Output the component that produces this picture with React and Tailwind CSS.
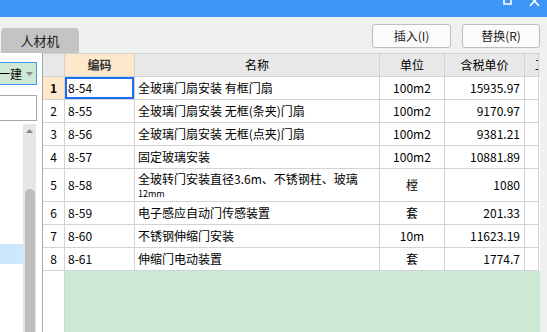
import React from 'react';

const rows = [
  { n: '1', code: '8-54', name: '全玻璃门扇安装 有框门扇', unit: '100m2', price: '15935.97' },
  { n: '2', code: '8-55', name: '全玻璃门扇安装 无框(条夹)门扇', unit: '100m2', price: '9170.97' },
  { n: '3', code: '8-56', name: '全玻璃门扇安装 无框(点夹)门扇', unit: '100m2', price: '9381.21' },
  { n: '4', code: '8-57', name: '固定玻璃安装', unit: '100m2', price: '10881.89' },
  { n: '5', code: '8-58', name: '全玻转门安装直径3.6m、不锈钢柱、玻璃', sub: '12mm', unit: '樘', price: '1080' },
  { n: '6', code: '8-59', name: '电子感应自动门传感装置', unit: '套', price: '201.33' },
  { n: '7', code: '8-60', name: '不锈钢伸缩门安装', unit: '10m', price: '11623.19' },
  { n: '8', code: '8-61', name: '伸缩门电动装置', unit: '套', price: '1774.7' },
];

const cols = 'grid grid-cols-[22px_70px_245px_65px_80px_14px]';
const cell = 'border-r border-b border-[#d3d3d3] flex items-center overflow-hidden whitespace-nowrap';

function TitleBar() {
  return (
    <div className="h-[17px] bg-[#3d96f5] flex justify-end items-start gap-[17px] pr-[7px]">
      <svg width="9" height="5" viewBox="0 0 9 5">
        <path d="M1 -3 V4 H8 V-3" fill="none" stroke="white" strokeWidth="1.6" />
      </svg>
      <svg width="11" height="6" viewBox="0 0 11 6">
        <path d="M1 -4 L10 6 M10 -4 L1 6" stroke="white" strokeWidth="1.6" />
      </svg>
    </div>
  );
}

function Toolbar() {
  return (
    <div className="h-[36px] flex justify-between">
      <div className="mt-[11px] ml-px w-[78px] h-[25px] rounded-t-[4px] bg-[#c4c4c4] flex items-center justify-center text-[13px] text-[#222]">
        人材机
      </div>
      <div className="flex gap-[11px] pt-[7px] pr-[7px]">
        <button className="w-[79px] h-[24px] rounded-[3px] border border-[#bdbdbd] bg-[#fbfbfb] text-[12px] text-[#222]">
          插入(I)
        </button>
        <button className="w-[78px] h-[24px] rounded-[3px] border border-[#bdbdbd] bg-[#fbfbfb] text-[12px] text-[#222]">
          替换(R)
        </button>
      </div>
    </div>
  );
}

function LeftPanel() {
  return (
    <div className="w-[43px] bg-white flex flex-col border-r border-[#a8a8a8]">
      <div className="mt-[9px] w-[37px] h-[23px] bg-[#cde8d3] border border-l-0 border-[#3d96f5] flex items-center">
        <span className="w-[22px] overflow-hidden whitespace-nowrap text-[12px] flex justify-end">一建</span>
        <svg width="7" height="4" viewBox="0 0 7 4" className="ml-[4px]">
          <path d="M0 0 H7 L3.5 4 Z" fill="#888" />
        </svg>
      </div>
      <div className="mt-[10px] w-[37px] h-[26px] bg-white border border-l-0 border-[#a8a8a8]" />
      <div className="flex flex-1 mt-[3px]">
        <div className="w-[23px] flex flex-col">
          <div className="h-[120px]" />
          <div className="h-[20px] bg-[#cce8ff]" />
        </div>
        <div className="w-[13px] bg-[#e6e6e6] flex flex-col items-center">
          <svg width="7" height="4" viewBox="0 0 7 4" className="mt-[5px]">
            <path d="M0 4 H7 L3.5 0 Z" fill="#888" />
          </svg>
          <div className="mt-[56px] w-[10px] flex-1 bg-[#bdbdbd] rounded-t-full" />
        </div>
      </div>
    </div>
  );
}

function Grid() {
  return (
    <div className="w-[497px] flex flex-col bg-white text-[12px] text-black">
      <div className={`${cols} h-[24px] bg-[#e8e8e8] border-t border-[#d3d3d3]`}>
        <div className={cell} />
        <div className={`${cell} justify-center bg-[#fde8cc] font-bold text-[#333]`}>编码</div>
        <div className={`${cell} justify-center`}>名称</div>
        <div className={`${cell} justify-center`}>单位</div>
        <div className={`${cell} justify-center`}>含税单价</div>
        <div className={`${cell} pl-[10px]`}>工</div>
      </div>
      {rows.map((r, i) => (
        <div key={r.n} className={`${cols} ${r.sub ? 'h-[33px]' : 'h-[23px]'}`}>
          <div className={`${cell} justify-center ${i === 0 ? 'bg-[#fde8cc] font-bold' : ''}`}>{r.n}</div>
          <div className={`${cell} pl-[3px] ${i === 0 ? 'shadow-[inset_0_0_0_2px_#1a6ff0]' : ''}`}>{r.code}</div>
          {r.sub ? (
            <div className="border-r border-b border-[#d3d3d3] overflow-hidden whitespace-nowrap pl-[3px] pt-[2px] flex flex-col">
              <span className="leading-[16px]">{r.name}</span>
              <span className="mt-[1px] text-[9px] leading-[11px]">{r.sub}</span>
            </div>
          ) : (
            <div className={`${cell} pl-[3px]`}>{r.name}</div>
          )}
          <div className={`${cell} justify-center`}>{r.unit}</div>
          <div className={`${cell} justify-end pr-[4px]`}>{r.price}</div>
          <div className={cell} />
        </div>
      ))}
      <div className="flex flex-1">
        <div className="w-[22px] bg-white border-r border-[#d3d3d3]" />
        <div className="flex-1 bg-[#cde8d3]" />
      </div>
    </div>
  );
}

export default function App() {
  return (
    <div className="w-[547px] h-[332px] overflow-hidden bg-[#f0f0f0] flex flex-col font-['Noto_Sans_CJK_SC','Noto_Sans',sans-serif]">
      <TitleBar />
      <Toolbar />
      <div className="flex flex-1 min-h-0">
        <LeftPanel />
        <Grid />
      </div>
    </div>
  );
}
